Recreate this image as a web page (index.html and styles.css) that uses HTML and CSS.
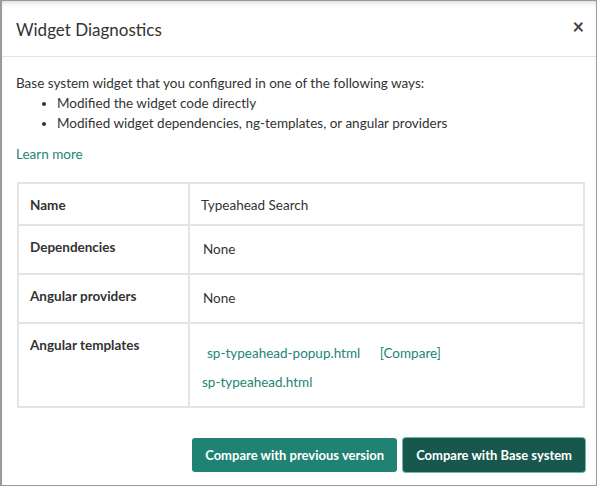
FILE: index.html
```html
<!DOCTYPE html>
<html lang="en">
<head>
    <meta charset="UTF-8">
    <meta name="viewport" content="width=device-width, initial-scale=1.0">
    <title>Widget Diagnostics</title>
    <link rel="stylesheet" href="styles.css">
</head>
<body>

<div class="dialog">
    <header class="dialog-header">
        <h1>Widget Diagnostics</h1>
        <span class="close-btn">&times;</span>
    </header>

    <div class="dialog-body">
        <p class="intro">Base system widget that you configured in one of the following ways:</p>
        <ul class="ways">
            <li>Modified the widget code directly</li>
            <li>Modified widget dependencies, ng-templates, or angular providers</li>
        </ul>
        <a href="#" class="learn-more">Learn more</a>

        <table class="diag-table">
            <tr class="row-name">
                <th>Name</th>
                <td>Typeahead Search</td>
            </tr>
            <tr>
                <th>Dependencies</th>
                <td><div class="value">None</div></td>
            </tr>
            <tr>
                <th>Angular providers</th>
                <td><div class="value">None</div></td>
            </tr>
            <tr>
                <th>Angular templates</th>
                <td>
                    <div class="tpl first">
                        <a href="#">sp-typeahead-popup.html</a>
                        <a href="#" class="compare">[Compare]</a>
                    </div>
                    <div class="tpl">
                        <a href="#">sp-typeahead.html</a>
                    </div>
                </td>
            </tr>
        </table>
    </div>

    <footer class="dialog-footer">
        <button class="btn btn-prev">Compare with previous version</button>
        <button class="btn btn-base">Compare with Base system</button>
    </footer>
</div>

</body>
</html>
```

FILE: styles.css
```css
html, body {
    margin: 0;
    height: 100%;
}

body {
    font-family: 'Lato', 'Liberation Sans', sans-serif;
    color: #333;
    background: #fff;
}

.dialog {
    box-sizing: border-box;
    height: 100%;
    border: 1px solid #9a9a9a;
    border-left-width: 2px;
    box-shadow: inset 0 4px 6px -4px rgba(0, 0, 0, 0.25);
    display: flex;
    flex-direction: column;
}

.dialog-header {
    display: flex;
    justify-content: space-between;
    align-items: center;
    height: 55px;
    padding: 0 12px 0 14px;
    border-bottom: 1px solid #e3e3e3;
}

.dialog-header h1 {
    margin: 0;
    font-size: 17px;
    font-weight: 400;
    color: #333;
    padding-top: 1px;
}

.close-btn {
    font-size: 20px;
    font-weight: bold;
    color: #444;
    margin-top: -6px;
}

.dialog-body {
    padding: 16px 12px 0 14px;
    font-size: 13.5px;
    line-height: 20px;
}

.intro {
    margin: 0;
}

.ways {
    margin: 0;
    padding-left: 41px;
}

.learn-more {
    display: inline-block;
    margin-top: 11px;
    color: #238575;
    text-decoration: none;
}

.diag-table {
    width: 100%;
    margin-top: 18px;
    margin-left: 1px;
    border-collapse: collapse;
    border: 2px solid #e4e4e4;
}

.diag-table th,
.diag-table td {
    border: 2px solid #e4e4e4;
    padding: 11px 10px 11px 11px;
    vertical-align: top;
    text-align: left;
}

.diag-table th {
    width: 148px;
    font-weight: 700;
}

.diag-table td {
    padding-bottom: 14px;
}

.row-name th,
.row-name td {
    padding-top: 11px;
    padding-bottom: 9px;
}

.value {
    padding: 2px 0 0 2px;
}

.tpl a {
    color: #238575;
    text-decoration: none;
}

.tpl.first {
    padding: 8px 0 0 6px;
}

.tpl + .tpl {
    margin-top: 9px;
    margin-left: 1px;
}

.compare {
    margin-left: 16px;
}

.dialog-footer {
    display: flex;
    justify-content: flex-end;
    gap: 6px;
    margin-top: auto;
    padding: 0 11px 13px;
}

.btn {
    height: 34px;
    padding: 0 13px;
    font-family: inherit;
    font-size: 13px;
    font-weight: 700;
    color: #fff;
    border: none;
    border-radius: 3px;
}

.btn-prev {
    background: #1f8273;
}

.btn-base {
    background: #17574d;
    box-shadow: 0 0 0 1px #6fb7ad;
}
```
